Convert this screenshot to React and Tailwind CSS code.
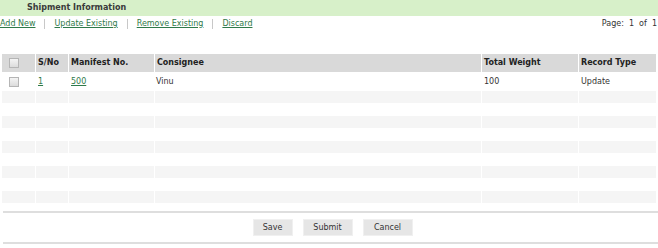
import React from "react";

const cols = "grid grid-cols-[33px_32px_85px_326px_96px_1fr] gap-x-px";

function Box() {
  return (
    <div className="w-[10px] h-[10px] border border-[#b5b5b5] bg-gradient-to-b from-[#f4f4f4] to-[#dcdcdc] ml-[5px]" />
  );
}

const links = ["Add New", "Update Existing", "Remove Existing", "Discard"];

export default function App() {
  const empty = [0, 1, 2, 3, 4, 5, 6, 7, 8];

  return (
    <div className="w-[658px] h-[248px] bg-white text-[#333] text-[8px] font-['DejaVu_Sans',Verdana,sans-serif] overflow-hidden">
      <div className="h-[16px] bg-[#d7f0c9] pl-[27px] flex items-center font-bold text-[#3a3a3a]">
        Shipment Information
      </div>

      <div className="h-[14px] mt-[1px] flex items-center justify-between pr-[1px]">
        <div className="flex items-center">
          {links.map((l, i) => (
            <div key={l} className="flex items-center">
              {i > 0 && <span className="w-px h-[10px] bg-[#c8c8c8] mx-[9px]" />}
              <a href="#" className="text-[#2f7a4a] underline">
                {l}
              </a>
            </div>
          ))}
        </div>
        <div className="whitespace-pre">Page:  1  of  1</div>
      </div>

      <div className="px-[2px] mt-[23px]">
        <div className={`${cols} h-[18px] items-center font-bold text-[#222]`}>
          {["", "S/No", "Manifest No.", "Consignee", "Total Weight", "Record Type"].map((h, i) => (
            <div key={i} className="bg-[#d9d9d9] h-full flex items-center pl-[2px]">
              {i === 0 ? <Box /> : h}
            </div>
          ))}
        </div>
        <div className={`${cols} h-[19px] items-center`}>
          <div className="pl-[2px]">
            <Box />
          </div>
          <div className="pl-[2px]">
            <a href="#" className="text-[#2f7a4a] underline">1</a>
          </div>
          <div className="pl-[2px]">
            <a href="#" className="text-[#2f7a4a] underline">500</a>
          </div>
          <div className="pl-[1px]">Vinu</div>
          <div className="pl-[2px]">100</div>
          <div className="pl-[2px]">Update</div>
        </div>
        {empty.map((r) => (
          <div key={r} className={`${cols} ${r % 2 === 0 ? "h-[12px]" : "h-[13px]"}`}>
            {[0, 1, 2, 3, 4, 5].map((c) => (
              <div key={c} className={r % 2 === 0 ? "bg-[#f5f5f5]" : ""} />
            ))}
          </div>
        ))}
      </div>

      <div className="ml-[3px] mt-[8px] border-t-2 border-b-2 border-[#dedede] h-[33px] flex items-center justify-center gap-[10px] pl-[4px]">
        <button className="w-[40px] h-[17px] bg-[#e6e6e6] border border-[#f0f0f0] text-[#333]">Save</button>
        <button className="w-[50px] h-[17px] bg-[#e6e6e6] border border-[#f0f0f0] text-[#333]">Submit</button>
        <button className="w-[50px] h-[17px] bg-[#e6e6e6] border border-[#f0f0f0] text-[#333]">Cancel</button>
      </div>
    </div>
  );
}
